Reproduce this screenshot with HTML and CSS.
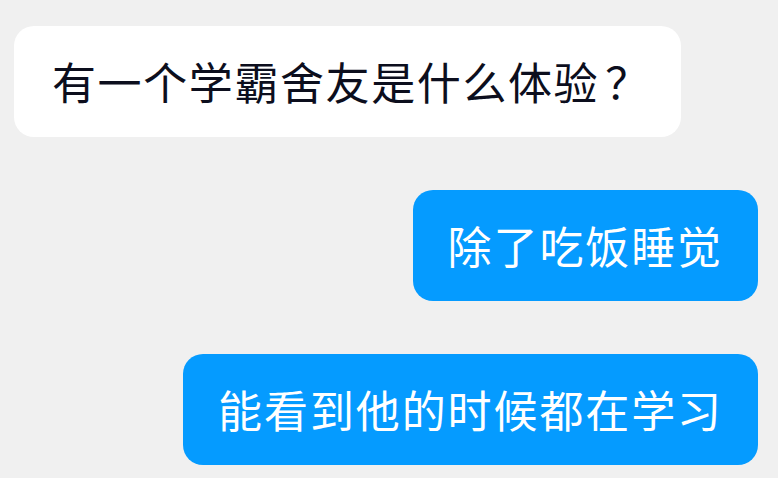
FILE: index.html
```html
<!DOCTYPE html>
<html lang="zh-CN">
<head>
  <meta charset="UTF-8" />
  <meta name="viewport" content="width=device-width, initial-scale=1.0"/>
  <title>学霸舍友</title>
  <link rel="stylesheet" href="styles.css">
</head>
<body>
  <div class="chat">
    <div class="bubble left">有一个学霸舍友是什么体验<span class="punct">？</span></div>
    <div class="bubble right">除了吃饭睡觉</div>
    <div class="bubble right">能看到他的时候都在学习</div>
  </div>
</body>
</html>
```

FILE: styles.css
```css
body {
  font-family: "Noto Sans CJK SC", "Noto Sans", sans-serif;
  background: #f0f0f0;
  margin: 0;
  padding: 0;
}
.chat {
  display: flex;
  flex-direction: column;
  gap: 53px;
  padding: 26px 20px 0 14px;
}
.bubble {
  font-size: 44px;
  letter-spacing: 1.6px;
  line-height: 55px;
  padding: 28px 35px;
  border-radius: 20px;
  white-space: nowrap;
}
.left {
  align-self: flex-start;
  background: #fff;
  color: #0c0e1d;
  padding-left: 38px;
  padding-right: 38px;
}
.punct {
  display: inline-block;
  width: 1em;
  padding-left: 6px;
  box-sizing: border-box;
}
.right {
  align-self: flex-end;
  background: #059bff;
  color: #fff;
  letter-spacing: 1.9px;
}
```
